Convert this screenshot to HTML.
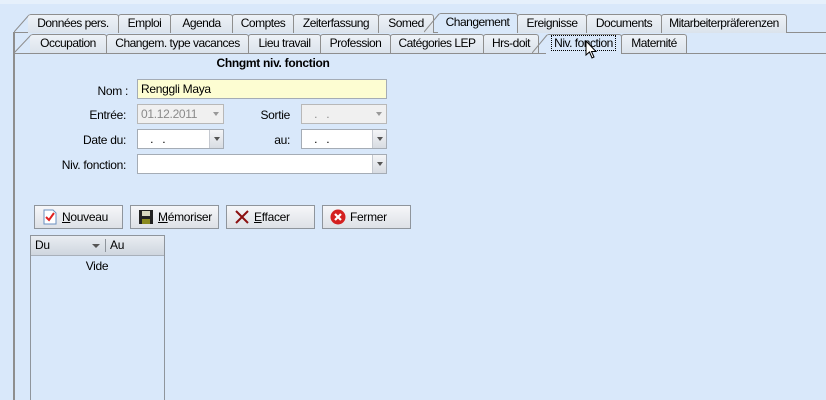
<!DOCTYPE html>
<html><head><meta charset="utf-8"><style>
*{box-sizing:border-box;margin:0;padding:0}
html,body{width:826px;height:400px;overflow:hidden}
body{background:#d9e8fa;font-family:"Liberation Sans",Arial,sans-serif;font-size:12px;color:#000;position:relative;letter-spacing:-0.3px}
.a{position:absolute}
.top{left:0;top:0;width:826px;height:4px;background:#e6f0fb}
.tab{position:absolute;height:19px;border:1px solid #8e8e8e;border-bottom:none;border-radius:3px 3px 0 0;background:linear-gradient(#eef2f7,#dbe3ec);text-align:center;line-height:17px;font-size:12px;letter-spacing:-0.5px;white-space:nowrap;overflow:hidden}
.sel{background:#d9e8fa}
.hl{height:1px;background:#8e8e8e}
.lbl{position:absolute;text-align:right;font-size:12px}
.inp{position:absolute;height:20px;border:1px solid #a5acb5;background:#fff;font-size:12px;line-height:18px;padding-left:3px}
.dd{position:absolute;right:0;top:0;width:14px;height:18px;border-left:1px solid #c5c9d0;background:linear-gradient(#f4f5f7,#d8dce2)}
.dd:after{content:"";position:absolute;left:4px;top:7px;border-left:3px solid transparent;border-right:3px solid transparent;border-top:4px solid #555}
.dis{background:#f0f0f0;color:#8a8a8a;border-color:#b8b8b8}
.dis .dd{background:none;border-left:none}
.dis .dd:after{border-top-color:#999}
.btn{position:absolute;top:205px;width:89px;height:24px;border:1px solid #8f959c;background:linear-gradient(#f6f7f9,#dde1e6);font-size:12px;line-height:22px;padding-left:27px}
.btn svg{position:absolute;left:7px;top:3px}
</style></head><body>
<div class="a top"></div>
<!-- row 1 -->
<div class="a hl" style="left:13px;top:32px;width:813px"></div>
<svg class="a" style="left:14px;top:14px" width="16" height="19"><line x1="0" y1="18" x2="15" y2="1" stroke="#8e8e8e"/></svg>
<div class="tab" style="left:28px;top:14px;width:91px;border-left:none">Données pers.</div>
<div class="tab" style="left:118px;top:14px;width:53px">Emploi</div>
<div class="tab" style="left:170px;top:14px;width:63px">Agenda</div>
<div class="tab" style="left:232px;top:14px;width:62px">Comptes</div>
<div class="tab" style="left:293px;top:14px;width:86px">Zeiterfassung</div>
<div class="tab" style="left:378px;top:14px;width:56px">Somed</div>
<div class="tab sel" style="left:438px;top:13px;width:80px;height:20px;border-left:none">Changement</div>
<svg class="a" style="left:424px;top:13px" width="16" height="20"><line x1="0" y1="19" x2="15" y2="1" stroke="#8e8e8e"/></svg>
<div class="tab" style="left:517px;top:14px;width:70px">Ereignisse</div>
<div class="tab" style="left:586px;top:14px;width:76px">Documents</div>
<div class="tab" style="left:661px;top:14px;width:126px">Mitarbeiterpräferenzen</div>
<!-- row 2 -->
<div class="a" style="left:13px;top:32px;width:2px;height:368px;background:#8e8e8e"></div>
<div class="a hl" style="left:13px;top:53px;width:813px"></div>
<svg class="a" style="left:14px;top:34px" width="18" height="20"><line x1="0" y1="19" x2="17" y2="1" stroke="#8e8e8e"/></svg>
<div class="tab" style="left:30px;top:34px;width:77px;border-left:none">Occupation</div>
<div class="tab" style="left:106px;top:34px;width:143px">Changem. type vacances</div>
<div class="tab" style="left:248px;top:34px;width:73px">Lieu travail</div>
<div class="tab" style="left:320px;top:34px;width:71px">Profession</div>
<div class="tab" style="left:390px;top:34px;width:94px">Catégories LEP</div>
<div class="tab" style="left:483px;top:34px;width:56px">Hrs-doit</div>
<div class="tab sel" style="left:546px;top:34px;width:76px;height:20px;border-left:none"><span style="border:1px dotted #000;padding:0 2px">Niv. fonction</span></div>
<svg class="a" style="left:532px;top:34px" width="16" height="20"><line x1="0" y1="19" x2="15" y2="1" stroke="#8e8e8e"/></svg>
<div class="tab" style="left:621px;top:34px;width:66px">Maternité</div>
<svg class="a" style="left:585px;top:40px" width="14" height="20"><path d="M1 1 L1 15 L4.5 12 L7 18 L9 17 L6.5 11.5 L11 11.5 Z" fill="#fff" stroke="#000" stroke-width="1"/></svg>
<!-- form -->
<div class="a" style="left:0;top:56px;width:546px;text-align:center;font-weight:bold;font-size:12px">Chngmt niv. fonction</div>
<div class="lbl" style="left:40px;top:84px;width:88px">Nom :</div>
<div class="inp" style="left:137px;top:79px;width:250px;background:#fdfdd2">Renggli Maya</div>
<div class="lbl" style="left:40px;top:108px;width:86px">Entrée:</div>
<div class="inp dis" style="left:137px;top:104px;width:87px">01.12.2011<div class="dd"></div></div>
<div class="lbl" style="left:240px;top:108px;width:50px">Sortie</div>
<div class="inp dis" style="left:301px;top:104px;width:86px">&nbsp;&nbsp;&nbsp;.&nbsp;&nbsp;&nbsp;.<div class="dd"></div></div>
<div class="lbl" style="left:40px;top:133px;width:86px">Date du:</div>
<div class="inp" style="left:137px;top:129px;width:87px">&nbsp;&nbsp;&nbsp;.&nbsp;&nbsp;&nbsp;.<div class="dd"></div></div>
<div class="lbl" style="left:240px;top:133px;width:50px">au:</div>
<div class="inp" style="left:301px;top:129px;width:86px">&nbsp;&nbsp;&nbsp;.&nbsp;&nbsp;&nbsp;.<div class="dd"></div></div>
<div class="lbl" style="left:20px;top:158px;width:106px">Niv. fonction:</div>
<div class="inp" style="left:137px;top:154px;width:250px"><div class="dd"></div></div>
<!-- buttons -->
<div class="btn" style="left:34px"><svg width="16" height="16"><path d="M2 1h9l3 3v11H2z" fill="#fff" stroke="#6a8fc0"/><path d="M4 8l3 3 5-7" fill="none" stroke="#e02020" stroke-width="2"/></svg><u>N</u>ouveau</div>
<div class="btn" style="left:130px"><svg width="16" height="16"><rect x="1" y="1" width="14" height="14" fill="#222"/><rect x="4" y="2" width="8" height="5" fill="#d8d8c0"/><rect x="4" y="10" width="8" height="5" fill="#8a8a20"/></svg><u>M</u>émoriser</div>
<div class="btn" style="left:226px"><svg width="16" height="16"><path d="M2 2L14 14M14 2L2 14" stroke="#8b1010" stroke-width="2"/></svg><u>E</u>ffacer</div>
<div class="btn" style="left:322px"><svg width="16" height="16"><circle cx="8" cy="8" r="7.5" fill="#d42020"/><path d="M5 5L11 11M11 5L5 11" stroke="#fff" stroke-width="2.2"/></svg>Fermer</div>
<!-- list -->
<div class="a" style="left:30px;top:235px;width:135px;height:175px;border:1px solid #8f959c;background:#d9e8fa">
<div style="height:20px;background:linear-gradient(#e9edf2,#cfd6df);border-bottom:1px solid #a8b0ba;position:relative;line-height:19px">
<span style="position:absolute;left:4px">Du</span>
<span style="position:absolute;left:61px;top:8px;border-left:4px solid transparent;border-right:4px solid transparent;border-top:4px solid #555"></span>
<span style="position:absolute;left:74px;top:3px;width:1px;height:13px;background:#8f959c"></span>
<span style="position:absolute;left:79px">Au</span></div>
<div style="text-align:center;line-height:20px;width:132px">Vide</div>
</div>
</body></html>
